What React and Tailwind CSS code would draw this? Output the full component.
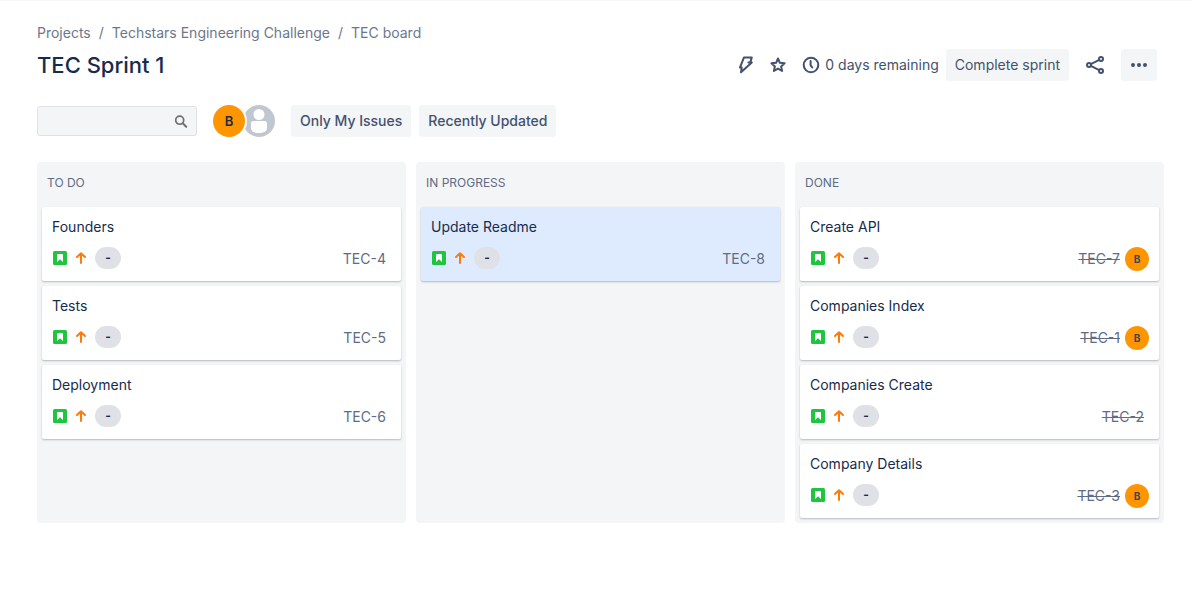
import React from "react";

const columns = [
  {
    title: "TO DO",
    cards: [
      { name: "Founders", id: "TEC-4" },
      { name: "Tests", id: "TEC-5" },
      { name: "Deployment", id: "TEC-6" },
    ],
  },
  {
    title: "IN PROGRESS",
    cards: [{ name: "Update Readme", id: "TEC-8", selected: true }],
  },
  {
    title: "DONE",
    cards: [
      { name: "Create API", id: "TEC-7", done: true, assignee: "B" },
      { name: "Companies Index", id: "TEC-1", done: true, assignee: "B" },
      { name: "Companies Create", id: "TEC-2", done: true },
      { name: "Company Details", id: "TEC-3", done: true, assignee: "B" },
    ],
  },
];

function BoltIcon() {
  return (
    <svg width="16" height="20" viewBox="0 0 16 20" fill="none" stroke="#42526e" strokeWidth="2" strokeLinejoin="round" aria-hidden="true">
      <path d="M6 2.400h7.800l-1.600 5.200h1.600L3 17.300l.7-4.700H1.900z" />
      <path d="M12.200 7.600H10.400" strokeLinecap="round" />
    </svg>
  );
}

function StarIcon() {
  return (
    <svg width="16" height="16" viewBox="0 0 16 16" fill="none" stroke="#42526e" strokeWidth="2" strokeLinejoin="round" aria-hidden="true">
      <path d="M8 1.500l1.900 4.300 4.700.5-3.500 3.100 1 4.600L8 11.600 3.900 14l1-4.600L1.400 6.300l4.700-.5z" />
    </svg>
  );
}

function ClockIcon() {
  return (
    <svg width="18" height="18" viewBox="0 0 18 18" fill="none" stroke="#42526e" strokeWidth="2" strokeLinecap="round" strokeLinejoin="round" aria-hidden="true">
      <circle cx="9" cy="9" r="7.300" />
      <path d="M8.600 5v4.300l1.700 2.200" />
    </svg>
  );
}

function ShareIcon() {
  return (
    <svg width="20" height="20" viewBox="0 0 20 20" fill="none" stroke="#42526e" strokeWidth="2" aria-hidden="true">
      <circle cx="4" cy="10" r="2" />
      <circle cx="16" cy="4" r="2" />
      <circle cx="16" cy="16" r="2" />
      <path d="M5.800 9.100l8.400-4.200M5.800 10.900l8.400 4.200" />
    </svg>
  );
}

function MoreIcon() {
  return (
    <svg width="18" height="6" viewBox="0 0 18 6" fill="#42526e" aria-hidden="true">
      <circle cx="3" cy="3" r="2" />
      <circle cx="9" cy="3" r="2" />
      <circle cx="15" cy="3" r="2" />
    </svg>
  );
}

function SearchIcon() {
  return (
    <svg width="14" height="14" viewBox="0 0 14 14" fill="none" stroke="#707070" strokeWidth="1.700" strokeLinecap="round" aria-hidden="true">
      <circle cx="5.700" cy="6.200" r="4" />
      <path d="M8.800 9.300l3.400 3.400" strokeWidth="2" />
    </svg>
  );
}

function PersonIcon() {
  return (
    <svg className="block" width="32" height="32" viewBox="0 0 32 32" aria-hidden="true">
      <circle cx="16" cy="16" r="16" fill="#c1c7d0" />
      <circle cx="16" cy="9.500" r="5.500" fill="#fff" />
      <path d="M8 18.500a2.500 2.500 0 0 1 2.500-2.500h11a2.500 2.500 0 0 1 2.500 2.500V23c0 3.500-3.500 5-8 5s-8-1.500-8-5z" fill="#fff" />
    </svg>
  );
}

function StoryIcon() {
  return (
    <svg className="block" width="14" height="14" viewBox="0 0 14 14" role="img" aria-label="Story">
      <rect width="14" height="14" rx="1.500" fill="#1fc43f" />
      <path d="M4 3.800a.8.8 0 0 1 .8-.8h4.400a.8.8 0 0 1 .8.8V11L7 8.300 4 11z" fill="#fff" />
    </svg>
  );
}

function PriorityIcon() {
  return (
    <svg className="block" width="12" height="14" viewBox="0 0 12 14" fill="none" stroke="#ff7a0c" strokeWidth="2" strokeLinecap="round" strokeLinejoin="round" role="img" aria-label="Medium priority">
      <path d="M6 12V2.400M2 6l4-3.800L10 6" />
    </svg>
  );
}

function Card({ card }) {
  return (
    <li
      className={`flex h-[74px] flex-col justify-between rounded-[2px] p-[10px] shadow-[0_1px_2px_rgba(9,30,66,0.28)] ${
        card.selected ? "bg-[#deebff]" : "bg-white"
      }`}
    >
      <p className="leading-5 text-[#172b4d]">{card.name}</p>
      <div className="flex h-6 justify-between">
        <div className="flex h-[22px] items-center gap-2 pl-px">
          <StoryIcon />
          <PriorityIcon />
          <span className="flex h-[22px] w-[26px] items-center justify-center rounded-full bg-[#dfe1e6] text-xs font-bold text-[#172b4d]">
            -
          </span>
        </div>
        <div className="flex items-center">
          <a href="#" className={`mr-[5px] text-[#5e6c84] ${card.done ? "line-through" : ""}`}>
            {card.id}
          </a>
          {card.assignee && (
            <span className="flex size-6 items-center justify-center rounded-full bg-[#ff9500] text-[10px] font-bold text-[#42484f]">
              {card.assignee}
            </span>
          )}
        </div>
      </div>
    </li>
  );
}

export default function App() {
  return (
    <main className="border-t border-[#f7f7f8] bg-white pt-[22px] pr-7 pl-[37px] font-['Inter','Liberation_Sans',sans-serif] text-sm text-[#42526e]">
      <nav aria-label="Breadcrumb" className="flex gap-2 leading-5 text-[#6b778c]">
        <a href="#">Projects</a>
        <span>/</span>
        <a href="#">Techstars Engineering Challenge</a>
        <span>/</span>
        <a href="#">TEC board</a>
      </nav>
      <header className="mt-[6px] mr-[7px] flex h-8 items-center justify-between">
        <h1 className="text-[22px] leading-7 font-medium text-[#172b4d]">TEC Sprint 1</h1>
        <div className="flex items-center">
          <button type="button" aria-label="Automation">
            <BoltIcon />
          </button>
          <button type="button" aria-label="Star board" className="ml-4">
            <StarIcon />
          </button>
          <span className="ml-4 flex items-center gap-[5px]">
            <ClockIcon />
            0 days remaining
          </span>
          <button type="button" className="ml-[7px] h-8 rounded-[3px] bg-[#f4f5f7] px-[9px]">
            Complete sprint
          </button>
          <button type="button" aria-label="Share" className="ml-4">
            <ShareIcon />
          </button>
          <button type="button" aria-label="More actions" className="ml-4 flex h-8 w-9 items-center justify-center rounded-[3px] bg-[#f4f5f7]">
            <MoreIcon />
          </button>
        </div>
      </header>
      <div className="mt-6 flex h-8 items-center">
        <label className="flex h-[30px] w-40 items-center rounded-[3px] border border-[#dfe1e6] bg-[#f4f5f7] px-2">
          <input type="text" aria-label="Search board" className="min-w-0 flex-1 bg-transparent outline-none" />
          <SearchIcon />
        </label>
        <div className="ml-4 flex">
          <button type="button" className="z-10 flex size-8 items-center justify-center rounded-full bg-[#ff9500] text-[13px] font-semibold text-[#172b4d] ring-2 ring-white">
            B
          </button>
          <button type="button" aria-label="Unassigned" className="-ml-[2px]">
            <PersonIcon />
          </button>
        </div>
        <div className="ml-4 flex gap-2 font-medium">
          <button type="button" className="h-8 rounded-[3px] bg-[#f4f5f7] px-[9px]">Only My Issues</button>
          <button type="button" className="h-8 rounded-[3px] bg-[#f4f5f7] px-[9px]">Recently Updated</button>
        </div>
      </div>
      <div className="mt-[25px] grid grid-cols-3 gap-[10px]">
        {columns.map((column) => (
          <section key={column.title} className="rounded-[4px] bg-[#f4f5f7] px-[5px] pb-[5px]">
            <h2 className="px-[5px] pt-[11px] pb-[14px] text-xs leading-5 text-[#5e6c84]">{column.title}</h2>
            <ul className="flex flex-col gap-[5px]">
              {column.cards.map((card) => (
                <Card key={card.id} card={card} />
              ))}
            </ul>
          </section>
        ))}
      </div>
    </main>
  );
}
